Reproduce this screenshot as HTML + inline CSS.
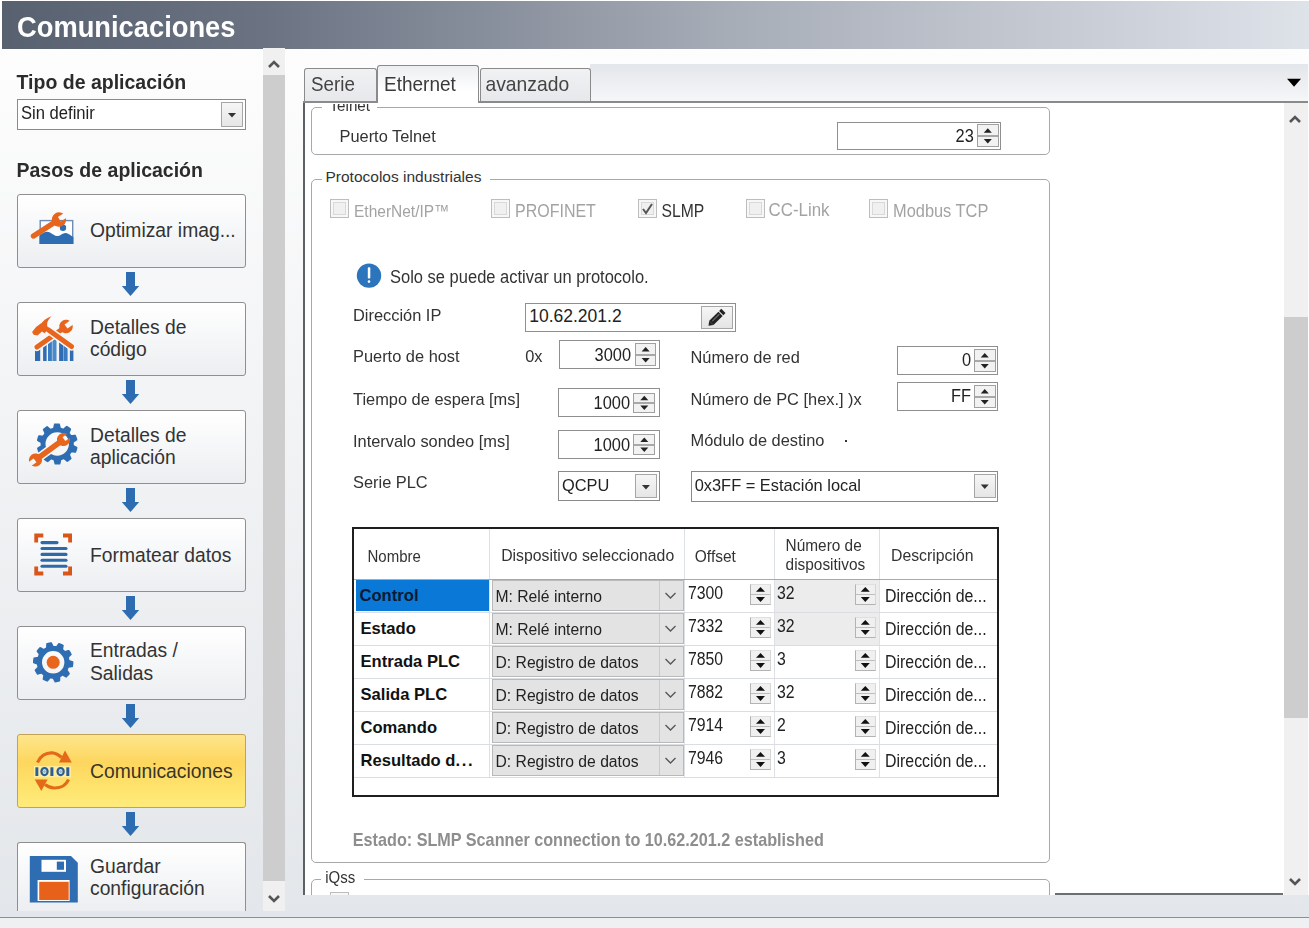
<!DOCTYPE html><html><head><meta charset="utf-8"><style>
html,body{margin:0;padding:0;}
body{width:1309px;height:928px;overflow:hidden;position:relative;background:#fff;font-family:"Liberation Sans", sans-serif;}
.a{position:absolute;box-sizing:border-box;}
.t{position:absolute;white-space:nowrap;}
svg.a{overflow:visible;}
</style></head><body>
<div class="a" style="left:0.0px;top:48.0px;width:1309.0px;height:869.0px;background:linear-gradient(#fdfdfd,#e3e6ea);"></div>
<div class="a" style="left:1.6px;top:1.0px;width:1307.4px;height:47.7px;background:linear-gradient(90deg,#586170 0%,#6b7383 20%,#a6acb6 55%,#dee2e9 100%);"></div>
<div class="t" style="left:17.0px;top:14.1px;font-size:27.3px;line-height:27.3px;font-weight:bold;color:#fff;transform:scaleY(1.08);transform-origin:0 23.11px;">Comunicaciones</div>
<div class="a" style="left:0.0px;top:916.5px;width:1309.0px;height:1.5px;background:#8c9095;"></div>
<div class="a" style="left:0.0px;top:918.0px;width:1309.0px;height:10.0px;background:#eff0f2;"></div>
<div class="t" style="left:16.5px;top:73.0px;font-size:19.5px;line-height:19.5px;font-weight:bold;color:#2b2b2b;transform:scaleY(1.06);transform-origin:0 16.51px;">Tipo de aplicación</div>
<div class="a" style="left:17.0px;top:99.0px;width:229.0px;height:31.0px;border:1px solid #8a8a8a;background:#fff;"></div>
<div class="a" style="left:221.0px;top:102.0px;width:22.0px;height:24.5px;border:1px solid #a6a6a6;background:linear-gradient(#f6f6f6,#e6e6e6);"></div>
<svg class="a" style="left:221px;top:102px;" width="23" height="25" viewBox="221 102 23 25"><polygon points="228.0,113.0 236.0,113.0 232.0,117.5" fill="#333"/></svg>
<div class="t" style="left:21.0px;top:105.8px;font-size:16.6px;line-height:16.6px;font-weight:normal;color:#222;transform:scaleY(1.05);transform-origin:0 14.05px;">Sin definir</div>
<div class="t" style="left:16.5px;top:160.7px;font-size:19.5px;line-height:19.5px;font-weight:bold;color:#2b2b2b;transform:scaleY(1.04);transform-origin:0 16.51px;">Pasos de aplicación</div>
<div class="a" style="left:17.0px;top:194.0px;width:229.0px;height:74.0px;border:1px solid #8f8f8f;border-radius:3px;background:linear-gradient(#ffffff,#eceef1);"></div>
<div class="a" style="left:17.0px;top:302.0px;width:229.0px;height:74.0px;border:1px solid #8f8f8f;border-radius:3px;background:linear-gradient(#ffffff,#eceef1);"></div>
<div class="a" style="left:17.0px;top:410.0px;width:229.0px;height:74.0px;border:1px solid #8f8f8f;border-radius:3px;background:linear-gradient(#ffffff,#eceef1);"></div>
<div class="a" style="left:17.0px;top:518.0px;width:229.0px;height:74.0px;border:1px solid #8f8f8f;border-radius:3px;background:linear-gradient(#ffffff,#eceef1);"></div>
<div class="a" style="left:17.0px;top:626.0px;width:229.0px;height:74.0px;border:1px solid #8f8f8f;border-radius:3px;background:linear-gradient(#ffffff,#eceef1);"></div>
<div class="a" style="left:17.0px;top:734.0px;width:229.0px;height:74.0px;border:1px solid #c2a257;border-radius:3px;background:linear-gradient(#fee58c 0%,#fdd65e 38%,#fee46e 75%,#ffeb7c 100%);"></div>
<div class="a" style="left:17.0px;top:842.0px;width:229.0px;height:69.0px;border:1px solid #8f8f8f;border-radius:3px;background:linear-gradient(#ffffff,#eceef1);border-bottom:none;border-bottom-left-radius:0;border-bottom-right-radius:0;"></div>
<svg class="a" style="left:120px;top:272px;" width="21" height="25" viewBox="120 272 21 25"><rect x="126" y="272" width="9" height="14.3" fill="#2d6cb0"/><polygon points="121.8,286 139.2,286 130.5,296" fill="#2d6cb0"/></svg>
<svg class="a" style="left:120px;top:380px;" width="21" height="25" viewBox="120 380 21 25"><rect x="126" y="380" width="9" height="14.3" fill="#2d6cb0"/><polygon points="121.8,394 139.2,394 130.5,404" fill="#2d6cb0"/></svg>
<svg class="a" style="left:120px;top:488px;" width="21" height="25" viewBox="120 488 21 25"><rect x="126" y="488" width="9" height="14.3" fill="#2d6cb0"/><polygon points="121.8,502 139.2,502 130.5,512" fill="#2d6cb0"/></svg>
<svg class="a" style="left:120px;top:596px;" width="21" height="25" viewBox="120 596 21 25"><rect x="126" y="596" width="9" height="14.3" fill="#2d6cb0"/><polygon points="121.8,610 139.2,610 130.5,620" fill="#2d6cb0"/></svg>
<svg class="a" style="left:120px;top:704px;" width="21" height="25" viewBox="120 704 21 25"><rect x="126" y="704" width="9" height="14.3" fill="#2d6cb0"/><polygon points="121.8,718 139.2,718 130.5,728" fill="#2d6cb0"/></svg>
<svg class="a" style="left:120px;top:812px;" width="21" height="25" viewBox="120 812 21 25"><rect x="126" y="812" width="9" height="14.3" fill="#2d6cb0"/><polygon points="121.8,826 139.2,826 130.5,836" fill="#2d6cb0"/></svg>
<div class="t" style="left:90.0px;top:221.1px;font-size:19.3px;line-height:19.3px;font-weight:normal;color:#333;">Optimizar imag...</div>
<div class="t" style="left:90.0px;top:318.1px;font-size:19.3px;line-height:19.3px;font-weight:normal;color:#333;">Detalles de</div>
<div class="t" style="left:90.0px;top:340.0px;font-size:19.3px;line-height:19.3px;font-weight:normal;color:#333;">código</div>
<div class="t" style="left:90.0px;top:426.4px;font-size:19.3px;line-height:19.3px;font-weight:normal;color:#333;">Detalles de</div>
<div class="t" style="left:90.0px;top:448.0px;font-size:19.3px;line-height:19.3px;font-weight:normal;color:#333;">aplicación</div>
<div class="t" style="left:90.0px;top:546.4px;font-size:19.3px;line-height:19.3px;font-weight:normal;color:#333;">Formatear datos</div>
<div class="t" style="left:90.0px;top:641.4px;font-size:19.3px;line-height:19.3px;font-weight:normal;color:#333;">Entradas /</div>
<div class="t" style="left:90.0px;top:664.3px;font-size:19.3px;line-height:19.3px;font-weight:normal;color:#333;">Salidas</div>
<div class="t" style="left:90.0px;top:761.9px;font-size:19.3px;line-height:19.3px;font-weight:normal;color:#3a3425;">Comunicaciones</div>
<div class="t" style="left:90.0px;top:857.2px;font-size:19.3px;line-height:19.3px;font-weight:normal;color:#333;">Guardar</div>
<div class="t" style="left:90.0px;top:879.2px;font-size:19.3px;line-height:19.3px;font-weight:normal;color:#333;">configuración</div>
<div class="a" style="left:263.0px;top:48.0px;width:22.0px;height:863.0px;background:#f0f0f0;"></div>
<div class="a" style="left:263.0px;top:75.0px;width:22.0px;height:806.0px;background:#cdcdcd;"></div>
<svg class="a" style="left:263px;top:48px;" width="22" height="863" viewBox="263 48 22 863"><polyline points="269,67 274,62 279,67" fill="none" stroke="#555" stroke-width="2.6"/><polyline points="269,896 274,901 279,896" fill="none" stroke="#555" stroke-width="2.6"/></svg>
<svg class="a" style="left:28px;top:208px;" width="50" height="40" viewBox="28 208 50 40"><rect x="40.2" y="220.6" width="32.5" height="22.6" fill="#fff" stroke="#6d8cb3" stroke-width="1.4"/><path d="M39.5,236 C43,232 47,231 50,232.5 C53,234 55,236.5 58,236 C61,235.5 63,232.5 66,233 C69,233.5 71,236 73.4,237 L73.4,243.9 L39.5,243.9 Z" fill="#2f6db3"/><circle cx="63" cy="227.8" r="3.2" fill="#2f6db3"/><g transform="translate(33.5,236) rotate(-32.91)"><mask id="m1" maskUnits="userSpaceOnUse" x="-40" y="-40" width="110.37268509697488" height="80"><rect x="-40" y="-40" width="110.37268509697488" height="80" fill="#fff"/><rect x="30.77268509697488" y="-2.6" width="9.8" height="5.2" fill="#000"/></mask><g mask="url(#m1)"><line x1="0" y1="0" x2="30.37268509697488" y2="0" stroke="#e8651d" stroke-width="5.4" stroke-linecap="round"/><circle cx="30.37268509697488" cy="0" r="7.2" fill="#e8651d"/></g></g></svg>
<svg class="a" style="left:28px;top:312px;" width="54" height="54" viewBox="28 312 54 54"><clipPath id="c2"><polygon points="34,351 54.2,338.5 74.5,351 74.5,362 34,362"/></clipPath><g clip-path="url(#c2)"><rect x="35" y="336" width="5.200000000000003" height="25" fill="#2f6cb2"/><rect x="43.1" y="336" width="3.5" height="25" fill="#2f6cb2"/><rect x="48" y="336" width="3.8999999999999986" height="25" fill="#3a7cc2"/><rect x="52.4" y="336" width="4.100000000000001" height="25" fill="#4a8acb"/><rect x="59.1" y="336" width="4.399999999999999" height="25" fill="#2f6cb2"/><rect x="63.8" y="336" width="3.799999999999997" height="25" fill="#3a7cc2"/><rect x="69.9" y="336" width="3.5" height="25" fill="#2f6cb2"/></g><g transform="translate(37,347) rotate(-35.26)"><mask id="m3" maskUnits="userSpaceOnUse" x="-40" y="-40" width="115.51408171415952" height="80"><rect x="-40" y="-40" width="115.51408171415952" height="80" fill="#fff"/><rect x="35.51408171415952" y="-2.5" width="9.8" height="5" fill="#000"/></mask><line x1="0" y1="0" x2="35.51408171415952" y2="0" stroke="#f7f8f9" stroke-width="8" stroke-linecap="round"/><g mask="url(#m3)"><line x1="0" y1="0" x2="35.51408171415952" y2="0" stroke="#e8651d" stroke-width="5" stroke-linecap="round"/><circle cx="35.51408171415952" cy="0" r="6.8" fill="#e8651d"/></g></g><line x1="48.5" y1="330" x2="71.5" y2="346.5" stroke="#f7f8f9" stroke-width="8" stroke-linecap="round"/><line x1="48.5" y1="330" x2="71.5" y2="346.5" stroke="#e8651d" stroke-width="5" stroke-linecap="round"/><path d="M32.1,332.1 L36.1,327.1 C38.5,324.8 40,324 41.4,323.2 C43,321.5 44,320.3 45.5,319.2 C47.5,317.8 49.5,316.8 51.5,316.2 C49.5,318.2 48.2,320 47.6,321.8 C47.1,323.2 46.9,324.6 47.2,325.9 L48.8,328.6 L44.5,333.2 L42,331.5 L37.5,335.6 L33.6,334.8 Z" fill="#e8651d"/></svg>
<svg class="a" style="left:28px;top:418px;" width="54" height="54" viewBox="28 418 54 54"><path d="M73.80,444.00 L73.80,444.26 L73.79,444.52 L73.78,444.78 L73.77,445.04 L74.21,445.34 L74.76,445.66 L75.37,446.01 L76.00,446.37 L76.64,446.77 L77.27,447.18 L77.49,447.54 L77.44,447.86 L77.37,448.18 L77.30,448.49 L77.23,448.81 L77.15,449.12 L77.07,449.44 L76.98,449.75 L76.89,450.06 L76.79,450.37 L76.69,450.67 L76.58,450.98 L76.47,451.28 L76.35,451.58 L76.23,451.88 L76.11,452.18 L75.97,452.48 L75.71,452.71 L74.95,452.70 L74.20,452.66 L73.47,452.61 L72.77,452.56 L72.11,452.51 L71.52,452.47 L71.35,452.67 L71.22,452.89 L71.07,453.11 L70.93,453.33 L70.78,453.55 L70.63,453.76 L70.47,453.97 L70.32,454.17 L70.16,454.38 L69.99,454.58 L70.17,455.08 L70.43,455.67 L70.72,456.30 L71.01,456.97 L71.30,457.66 L71.57,458.37 L71.54,458.79 L71.30,459.02 L71.06,459.24 L70.82,459.45 L70.58,459.66 L70.33,459.87 L70.08,460.08 L69.83,460.28 L69.57,460.47 L69.31,460.67 L69.05,460.85 L68.78,461.04 L68.51,461.22 L68.24,461.39 L67.96,461.56 L67.69,461.73 L67.41,461.89 L67.05,461.93 L66.45,461.47 L65.86,461.00 L65.30,460.53 L64.76,460.07 L64.27,459.65 L63.81,459.27 L63.55,459.34 L63.31,459.43 L63.07,459.53 L62.82,459.62 L62.58,459.71 L62.33,459.79 L62.08,459.87 L61.83,459.94 L61.58,460.01 L61.33,460.08 L61.18,460.59 L61.05,461.22 L60.91,461.90 L60.75,462.61 L60.58,463.34 L60.38,464.07 L60.10,464.39 L59.78,464.44 L59.46,464.48 L59.14,464.51 L58.82,464.54 L58.49,464.56 L58.17,464.58 L57.85,464.59 L57.52,464.60 L57.20,464.60 L56.88,464.60 L56.55,464.59 L56.23,464.58 L55.91,464.56 L55.58,464.54 L55.26,464.51 L54.94,464.48 L54.64,464.29 L54.41,463.57 L54.22,462.84 L54.04,462.13 L53.87,461.45 L53.72,460.81 L53.57,460.24 L53.32,460.14 L53.07,460.08 L52.82,460.01 L52.57,459.94 L52.32,459.87 L52.07,459.79 L51.82,459.71 L51.58,459.62 L51.33,459.53 L51.09,459.43 L50.67,459.76 L50.19,460.19 L49.68,460.66 L49.13,461.14 L48.56,461.63 L47.97,462.11 L47.56,462.21 L47.28,462.05 L46.99,461.89 L46.71,461.73 L46.44,461.56 L46.16,461.39 L45.89,461.22 L45.62,461.04 L45.35,460.85 L45.09,460.67 L44.83,460.47 L44.57,460.28 L44.32,460.08 L44.07,459.87 L43.82,459.66 L43.58,459.45 L43.34,459.24 L43.20,458.91 L43.44,458.20 L43.71,457.49 L43.98,456.81 L44.25,456.16 L44.50,455.56 L44.72,455.00 L44.58,454.78 L44.41,454.58 L44.24,454.38 L44.08,454.17 L43.93,453.97 L43.77,453.76 L43.62,453.55 L43.47,453.33 L43.33,453.11 L43.18,452.89 L42.65,452.91 L42.01,452.98 L41.33,453.05 L40.60,453.13 L39.85,453.19 L39.09,453.23 L38.70,453.06 L38.56,452.77 L38.43,452.48 L38.29,452.18 L38.17,451.88 L38.05,451.58 L37.93,451.28 L37.82,450.98 L37.71,450.67 L37.61,450.37 L37.51,450.06 L37.42,449.75 L37.33,449.44 L37.25,449.12 L37.17,448.81 L37.10,448.49 L37.03,448.18 L37.11,447.83 L37.73,447.40 L38.36,446.98 L38.98,446.59 L39.58,446.23 L40.13,445.88 L40.64,445.57 L40.65,445.30 L40.63,445.04 L40.62,444.78 L40.61,444.52 L40.60,444.26 L40.60,444.00 L40.60,443.74 L40.61,443.48 L40.62,443.22 L40.63,442.96 L40.19,442.66 L39.64,442.34 L39.03,441.99 L38.40,441.63 L37.76,441.23 L37.13,440.82 L36.91,440.46 L36.96,440.14 L37.03,439.82 L37.10,439.51 L37.17,439.19 L37.25,438.88 L37.33,438.56 L37.42,438.25 L37.51,437.94 L37.61,437.63 L37.71,437.33 L37.82,437.02 L37.93,436.72 L38.05,436.42 L38.17,436.12 L38.29,435.82 L38.43,435.52 L38.69,435.29 L39.45,435.30 L40.20,435.34 L40.93,435.39 L41.63,435.44 L42.29,435.49 L42.88,435.53 L43.05,435.33 L43.18,435.11 L43.33,434.89 L43.47,434.67 L43.62,434.45 L43.77,434.24 L43.93,434.03 L44.08,433.83 L44.24,433.62 L44.41,433.42 L44.23,432.92 L43.97,432.33 L43.68,431.70 L43.39,431.03 L43.10,430.34 L42.83,429.63 L42.86,429.21 L43.10,428.98 L43.34,428.76 L43.58,428.55 L43.82,428.34 L44.07,428.13 L44.32,427.92 L44.57,427.72 L44.83,427.53 L45.09,427.33 L45.35,427.15 L45.62,426.96 L45.89,426.78 L46.16,426.61 L46.44,426.44 L46.71,426.27 L46.99,426.11 L47.35,426.07 L47.95,426.53 L48.54,427.00 L49.10,427.47 L49.64,427.93 L50.13,428.35 L50.59,428.73 L50.85,428.66 L51.09,428.57 L51.33,428.47 L51.58,428.38 L51.82,428.29 L52.07,428.21 L52.32,428.13 L52.57,428.06 L52.82,427.99 L53.07,427.92 L53.22,427.41 L53.35,426.78 L53.49,426.10 L53.65,425.39 L53.82,424.66 L54.02,423.93 L54.30,423.61 L54.62,423.56 L54.94,423.52 L55.26,423.49 L55.58,423.46 L55.91,423.44 L56.23,423.42 L56.55,423.41 L56.88,423.40 L57.20,423.40 L57.52,423.40 L57.85,423.41 L58.17,423.42 L58.49,423.44 L58.82,423.46 L59.14,423.49 L59.46,423.52 L59.76,423.71 L59.99,424.43 L60.18,425.16 L60.36,425.87 L60.53,426.55 L60.68,427.19 L60.83,427.76 L61.08,427.86 L61.33,427.92 L61.58,427.99 L61.83,428.06 L62.08,428.13 L62.33,428.21 L62.58,428.29 L62.82,428.38 L63.07,428.47 L63.31,428.57 L63.73,428.24 L64.21,427.81 L64.72,427.34 L65.27,426.86 L65.84,426.37 L66.43,425.89 L66.84,425.79 L67.12,425.95 L67.41,426.11 L67.69,426.27 L67.96,426.44 L68.24,426.61 L68.51,426.78 L68.78,426.96 L69.05,427.15 L69.31,427.33 L69.57,427.53 L69.83,427.72 L70.08,427.92 L70.33,428.13 L70.58,428.34 L70.82,428.55 L71.06,428.76 L71.20,429.09 L70.96,429.80 L70.69,430.51 L70.42,431.19 L70.15,431.84 L69.90,432.44 L69.68,433.00 L69.82,433.22 L69.99,433.42 L70.16,433.62 L70.32,433.83 L70.47,434.03 L70.63,434.24 L70.78,434.45 L70.93,434.67 L71.07,434.89 L71.22,435.11 L71.75,435.09 L72.39,435.02 L73.07,434.95 L73.80,434.87 L74.55,434.81 L75.31,434.77 L75.70,434.94 L75.84,435.23 L75.97,435.52 L76.11,435.82 L76.23,436.12 L76.35,436.42 L76.47,436.72 L76.58,437.02 L76.69,437.33 L76.79,437.63 L76.89,437.94 L76.98,438.25 L77.07,438.56 L77.15,438.88 L77.23,439.19 L77.30,439.51 L77.37,439.82 L77.29,440.17 L76.67,440.60 L76.04,441.02 L75.42,441.41 L74.82,441.77 L74.27,442.12 L73.76,442.43 L73.75,442.70 L73.77,442.96 L73.78,443.22 L73.79,443.48 L73.80,443.74 Z M57.2,432.3 A11.7,11.7 0 1 0 57.2,455.7 A11.7,11.7 0 1 0 57.2,432.3 Z" fill="#2f6db3" fill-rule="evenodd"/><g transform="translate(35.5,460) rotate(-36.21)"><mask id="m4" maskUnits="userSpaceOnUse" x="-40" y="-40" width="114.70230539892127" height="80"><rect x="-40" y="-40" width="114.70230539892127" height="80" fill="#fff"/><rect x="35.30230539892127" y="-2.4" width="9" height="4.8" fill="#000"/><rect x="-9.6" y="-2.4" width="9" height="4.8" fill="#000"/></mask><line x1="0" y1="0" x2="34.70230539892127" y2="0" stroke="#f7f8f9" stroke-width="8.6" stroke-linecap="round"/><g mask="url(#m4)"><line x1="0" y1="0" x2="34.70230539892127" y2="0" stroke="#e8651d" stroke-width="5.6" stroke-linecap="round"/><circle cx="34.70230539892127" cy="0" r="6.6" fill="#e8651d"/><circle cx="0" cy="0" r="6.6" fill="#e8651d"/></g></g></svg>
<svg class="a" style="left:30px;top:530px;" width="46" height="49" viewBox="30 530 46 49"><polyline points="43.3,535.5 36.199999999999996,535.5 36.199999999999996,542.6" fill="none" stroke="#d9561a" stroke-width="3.8"/><polyline points="63,535.5 70.1,535.5 70.1,542.6" fill="none" stroke="#d9561a" stroke-width="3.8"/><polyline points="43.3,573.5 36.199999999999996,573.5 36.199999999999996,566.4" fill="none" stroke="#d9561a" stroke-width="3.8"/><polyline points="63,573.5 70.1,573.5 70.1,566.4" fill="none" stroke="#d9561a" stroke-width="3.8"/><line x1="42" y1="542.6" x2="57" y2="542.6" stroke="#2f6aa8" stroke-width="3.1" stroke-linecap="round"/><line x1="42" y1="548.5" x2="66" y2="548.5" stroke="#2f6aa8" stroke-width="3.1" stroke-linecap="round"/><line x1="42" y1="554.4" x2="66" y2="554.4" stroke="#2f6aa8" stroke-width="3.1" stroke-linecap="round"/><line x1="42" y1="560.3" x2="66" y2="560.3" stroke="#2f6aa8" stroke-width="3.1" stroke-linecap="round"/><line x1="42" y1="566.3" x2="66" y2="566.3" stroke="#2f6aa8" stroke-width="3.1" stroke-linecap="round"/></svg>
<svg class="a" style="left:30px;top:640px;" width="46" height="45" viewBox="30 640 46 45"><path d="M73.40,662.30 L73.40,662.62 L73.39,662.93 L73.38,663.25 L73.36,663.57 L73.34,663.88 L73.31,664.20 L73.28,664.52 L73.24,664.83 L73.20,665.15 L73.15,665.46 L73.10,665.77 L73.04,666.09 L72.98,666.40 L72.91,666.71 L72.84,667.02 L72.17,667.17 L71.46,667.29 L70.76,667.40 L70.08,667.49 L69.45,667.58 L68.87,667.67 L68.63,667.86 L68.54,668.10 L68.45,668.34 L68.35,668.58 L68.25,668.81 L68.15,669.05 L68.04,669.28 L67.93,669.52 L67.81,669.75 L67.69,669.97 L67.83,670.34 L68.17,670.84 L68.54,671.37 L68.94,671.94 L69.33,672.54 L69.72,673.15 L69.91,673.65 L69.73,673.92 L69.54,674.17 L69.35,674.43 L69.16,674.68 L68.96,674.93 L68.76,675.18 L68.56,675.42 L68.35,675.66 L68.14,675.89 L67.93,676.13 L67.71,676.36 L67.48,676.58 L67.26,676.81 L67.03,677.03 L66.79,677.24 L66.56,677.45 L66.32,677.66 L65.68,677.39 L65.04,677.07 L64.41,676.75 L63.81,676.43 L63.24,676.12 L62.72,675.85 L62.42,675.86 L62.20,676.01 L61.99,676.15 L61.77,676.28 L61.55,676.42 L61.33,676.55 L61.10,676.67 L60.87,676.79 L60.65,676.91 L60.42,677.03 L60.31,677.41 L60.29,678.01 L60.28,678.66 L60.26,679.35 L60.23,680.06 L60.18,680.78 L60.04,681.31 L59.74,681.41 L59.44,681.51 L59.14,681.61 L58.84,681.70 L58.53,681.78 L58.22,681.87 L57.92,681.94 L57.61,682.01 L57.30,682.08 L56.99,682.14 L56.67,682.20 L56.36,682.25 L56.05,682.30 L55.73,682.34 L55.42,682.38 L55.10,682.41 L54.78,682.44 L54.43,681.85 L54.09,681.21 L53.77,680.57 L53.48,679.96 L53.20,679.39 L52.94,678.86 L52.68,678.69 L52.43,678.68 L52.17,678.67 L51.91,678.65 L51.66,678.63 L51.40,678.60 L51.14,678.57 L50.89,678.54 L50.63,678.50 L50.38,678.46 L50.07,678.70 L49.70,679.18 L49.31,679.70 L48.89,680.24 L48.45,680.80 L47.99,681.36 L47.56,681.70 L47.26,681.61 L46.96,681.51 L46.66,681.41 L46.36,681.31 L46.06,681.20 L45.76,681.08 L45.47,680.96 L45.18,680.84 L44.89,680.71 L44.60,680.58 L44.31,680.44 L44.03,680.30 L43.75,680.15 L43.47,680.00 L43.19,679.85 L42.92,679.69 L42.65,679.52 L42.71,678.84 L42.81,678.12 L42.92,677.42 L43.04,676.75 L43.16,676.12 L43.25,675.55 L43.15,675.26 L42.95,675.10 L42.75,674.94 L42.55,674.77 L42.35,674.60 L42.16,674.43 L41.97,674.26 L41.79,674.08 L41.60,673.90 L41.42,673.71 L41.03,673.73 L40.45,673.90 L39.83,674.09 L39.17,674.29 L38.48,674.48 L37.78,674.66 L37.24,674.68 L37.05,674.43 L36.86,674.17 L36.67,673.92 L36.49,673.65 L36.32,673.39 L36.14,673.12 L35.98,672.85 L35.81,672.58 L35.65,672.31 L35.50,672.03 L35.35,671.75 L35.20,671.47 L35.06,671.19 L34.92,670.90 L34.79,670.61 L34.66,670.32 L34.54,670.03 L34.99,669.51 L35.49,668.99 L36.00,668.49 L36.49,668.02 L36.95,667.58 L37.37,667.17 L37.45,666.88 L37.38,666.63 L37.32,666.38 L37.25,666.13 L37.19,665.88 L37.14,665.63 L37.09,665.37 L37.04,665.12 L37.00,664.87 L36.96,664.61 L36.63,664.39 L36.07,664.19 L35.45,663.98 L34.80,663.75 L34.13,663.50 L33.46,663.23 L33.01,662.93 L33.00,662.62 L33.00,662.30 L33.00,661.98 L33.01,661.67 L33.02,661.35 L33.04,661.03 L33.06,660.72 L33.09,660.40 L33.12,660.08 L33.16,659.77 L33.20,659.45 L33.25,659.14 L33.30,658.83 L33.36,658.51 L33.42,658.20 L33.49,657.89 L33.56,657.58 L34.23,657.43 L34.94,657.31 L35.64,657.20 L36.32,657.11 L36.95,657.02 L37.53,656.93 L37.77,656.74 L37.86,656.50 L37.95,656.26 L38.05,656.02 L38.15,655.79 L38.25,655.55 L38.36,655.32 L38.47,655.08 L38.59,654.85 L38.71,654.63 L38.57,654.26 L38.23,653.76 L37.86,653.23 L37.46,652.66 L37.07,652.06 L36.68,651.45 L36.49,650.95 L36.67,650.68 L36.86,650.43 L37.05,650.17 L37.24,649.92 L37.44,649.67 L37.64,649.42 L37.84,649.18 L38.05,648.94 L38.26,648.71 L38.47,648.47 L38.69,648.24 L38.92,648.02 L39.14,647.79 L39.37,647.57 L39.61,647.36 L39.84,647.15 L40.08,646.94 L40.72,647.21 L41.36,647.53 L41.99,647.85 L42.59,648.17 L43.16,648.48 L43.68,648.75 L43.98,648.74 L44.20,648.59 L44.41,648.45 L44.63,648.32 L44.85,648.18 L45.07,648.05 L45.30,647.93 L45.53,647.81 L45.75,647.69 L45.98,647.57 L46.09,647.19 L46.11,646.59 L46.12,645.94 L46.14,645.25 L46.17,644.54 L46.22,643.82 L46.36,643.29 L46.66,643.19 L46.96,643.09 L47.26,642.99 L47.56,642.90 L47.87,642.82 L48.18,642.73 L48.48,642.66 L48.79,642.59 L49.10,642.52 L49.41,642.46 L49.73,642.40 L50.04,642.35 L50.35,642.30 L50.67,642.26 L50.98,642.22 L51.30,642.19 L51.62,642.16 L51.97,642.75 L52.31,643.39 L52.63,644.03 L52.92,644.64 L53.20,645.21 L53.46,645.74 L53.72,645.91 L53.97,645.92 L54.23,645.93 L54.49,645.95 L54.74,645.97 L55.00,646.00 L55.26,646.03 L55.51,646.06 L55.77,646.10 L56.02,646.14 L56.33,645.90 L56.70,645.42 L57.09,644.90 L57.51,644.36 L57.95,643.80 L58.41,643.24 L58.84,642.90 L59.14,642.99 L59.44,643.09 L59.74,643.19 L60.04,643.29 L60.34,643.40 L60.64,643.52 L60.93,643.64 L61.22,643.76 L61.51,643.89 L61.80,644.02 L62.09,644.16 L62.37,644.30 L62.65,644.45 L62.93,644.60 L63.21,644.75 L63.48,644.91 L63.75,645.08 L63.69,645.76 L63.59,646.48 L63.48,647.18 L63.36,647.85 L63.24,648.48 L63.15,649.05 L63.25,649.34 L63.45,649.50 L63.65,649.66 L63.85,649.83 L64.05,650.00 L64.24,650.17 L64.43,650.34 L64.61,650.52 L64.80,650.70 L64.98,650.89 L65.37,650.87 L65.95,650.70 L66.57,650.51 L67.23,650.31 L67.92,650.12 L68.62,649.94 L69.16,649.92 L69.35,650.17 L69.54,650.43 L69.73,650.68 L69.91,650.95 L70.08,651.21 L70.26,651.48 L70.42,651.75 L70.59,652.02 L70.75,652.29 L70.90,652.57 L71.05,652.85 L71.20,653.13 L71.34,653.41 L71.48,653.70 L71.61,653.99 L71.74,654.28 L71.86,654.57 L71.41,655.09 L70.91,655.61 L70.40,656.11 L69.91,656.58 L69.45,657.02 L69.03,657.43 L68.95,657.72 L69.02,657.97 L69.08,658.22 L69.15,658.47 L69.21,658.72 L69.26,658.97 L69.31,659.23 L69.36,659.48 L69.40,659.73 L69.44,659.99 L69.77,660.21 L70.33,660.41 L70.95,660.62 L71.60,660.85 L72.27,661.10 L72.94,661.37 L73.39,661.67 L73.40,661.98 Z M53.2,651.1 A11.2,11.2 0 1 0 53.2,673.5 A11.2,11.2 0 1 0 53.2,651.1 Z" fill="#2f6db3" fill-rule="evenodd"/><circle cx="53.2" cy="662.3" r="6.5" fill="#e8651d"/></svg>
<svg class="a" style="left:30px;top:745px;" width="46" height="50" viewBox="30 745 46 50"><path d="M37.5,762.5 C40,756 46,752.5 52,752.8 C55.5,753 58.5,754.5 61.5,757.5" fill="none" stroke="#e26a18" stroke-width="3.2"/><polygon points="59,762.4 71.8,762.4 65,750.6" fill="#e26a18"/><path d="M68.5,779.5 C66,785.5 60,788.2 54,788 C50.5,787.8 47.5,786.5 45,784.5" fill="none" stroke="#e26a18" stroke-width="3.2"/><polygon points="34.8,779.4 47.6,779.4 41.3,791" fill="#e26a18"/><rect x="34" y="766" width="37" height="11.3" fill="#fff3b8" opacity="0.7"/><rect x="35.4" y="767.3" width="2.9" height="8.7" fill="#2b5e96"/><ellipse cx="44.5" cy="771.6" rx="3.1" ry="3.6" fill="none" stroke="#2b5e96" stroke-width="2.2"/><circle cx="44.5" cy="771.6" r="1.3" fill="#7fb6e0"/><rect x="50.4" y="767.3" width="3" height="8.7" fill="#2b5e96"/><ellipse cx="60.6" cy="771.6" rx="3.1" ry="3.6" fill="none" stroke="#2b5e96" stroke-width="2.2"/><circle cx="60.6" cy="771.6" r="1.3" fill="#7fb6e0"/><rect x="66.3" y="767.3" width="3" height="8.7" fill="#2b5e96"/></svg>
<svg class="a" style="left:26px;top:852px;" width="56" height="54" viewBox="26 852 56 54"><path d="M29.8,856 L71,856 L77.8,862.8 L77.8,902.5 L29.8,902.5 Z" fill="#2f6db3"/><rect x="41.5" y="859.8" width="24.5" height="12" fill="#fff"/><rect x="56.8" y="861.6" width="7.2" height="8.2" fill="#2f6db3"/><rect x="37.6" y="880" width="32" height="21" fill="#fff"/><rect x="39.2" y="881.8" width="29.5" height="18.2" fill="#e8611a"/></svg>
<div class="a" style="left:590.0px;top:64.0px;width:718.0px;height:38.0px;background:linear-gradient(#e3e6ea,#f6f7f9);"></div>
<div class="a" style="left:303.5px;top:67.5px;width:73.0px;height:34.0px;border:1px solid #8a8a8a;border-bottom:none;border-radius:3px 3px 0 0;background:linear-gradient(#f0f1f3,#e6e8eb);"></div>
<div class="a" style="left:479.5px;top:67.5px;width:111.5px;height:34.0px;border:1px solid #8a8a8a;border-bottom:none;border-radius:3px 3px 0 0;background:linear-gradient(#f0f1f3,#e6e8eb);"></div>
<div class="a" style="left:303.0px;top:101.0px;width:1005.0px;height:1.5px;background:#8a8a8a;"></div>
<div class="t" style="left:311.0px;top:76.2px;font-size:18.8px;line-height:18.8px;font-weight:normal;color:#444;transform:scaleY(1.06);transform-origin:0 15.91px;">Serie</div>
<div class="t" style="left:485.5px;top:75.4px;font-size:19.3px;line-height:19.3px;font-weight:normal;color:#444;transform:scaleY(1.04);transform-origin:0 16.34px;">avanzado</div>
<svg class="a" style="left:1284px;top:76px;" width="20" height="14" viewBox="1284 76 20 14"><polygon points="1287.0,78.7 1301.0,78.7 1294,86.7" fill="#000"/></svg>
<div class="a" style="left:303.0px;top:102.5px;width:1006.0px;height:792.5px;background:#fff;"></div>
<div class="a" style="left:303.0px;top:102.5px;width:2.0px;height:792.5px;background:#5d6166;"></div>
<div class="a" style="left:1054.5px;top:893.0px;width:228.5px;height:2.0px;background:#6b6f74;"></div>
<div class="a" style="left:1284.0px;top:102.5px;width:23.5px;height:792.5px;background:#f0f0f0;"></div>
<div class="a" style="left:1284.0px;top:317.0px;width:23.5px;height:401.0px;background:#cdcdcd;"></div>
<svg class="a" style="left:1284px;top:102px;" width="24" height="793" viewBox="1284 102 24 793"><polyline points="1290,122 1295,117 1300,122" fill="none" stroke="#555" stroke-width="2.6"/><polyline points="1290,879 1295,884 1300,879" fill="none" stroke="#555" stroke-width="2.6"/></svg>
<div class="a" style="left:376.5px;top:64.5px;width:102.0px;height:38.0px;border:1px solid #8a8a8a;border-bottom:none;border-radius:3px 3px 0 0;background:linear-gradient(#eceef1,#ffffff 70%);"></div>
<div class="a" style="left:377.5px;top:100.0px;width:100.0px;height:4.0px;background:#fff;"></div>
<div class="t" style="left:384.0px;top:74.5px;font-size:19.0px;line-height:19.0px;font-weight:normal;color:#3a3a3a;transform:scaleY(1.04);transform-origin:0 16.08px;">Ethernet</div>
<div class="a" style="left:305px;top:103.8px;width:979px;height:791.2px;overflow:hidden;">
<div class="a" style="left:-305px;top:-103.8px;width:1309px;height:928px;">
<div class="a" style="left:311.0px;top:106.5px;width:738.5px;height:48.0px;border:1px solid #a8a8a8;border-radius:5px;"></div>
<div class="a" style="left:322.0px;top:104.5px;width:54.5px;height:5.0px;background:#fff;"></div>
<div class="t" style="left:329.5px;top:97.7px;font-size:15.2px;line-height:15.2px;font-weight:normal;color:#333;transform:scaleY(1.1);transform-origin:0 12.87px;">Telnet</div>
<div class="t" style="left:339.5px;top:127.7px;font-size:16.4px;line-height:16.4px;font-weight:normal;color:#333;transform:scaleY(1.06);transform-origin:0 13.88px;">Puerto Telnet</div>
<div class="a" style="left:837.3px;top:121.6px;width:164.2px;height:28.5px;border:1px solid #8f8f8f;background:#fff;"></div>
<div class="a" style="left:976.8px;top:124.4px;width:22.0px;height:22.9px;border:1px solid #a0a0a0;background:#f2f2f2;"></div>
<div class="a" style="left:977.8px;top:134.9px;width:20.0px;height:2.0px;background:#a8a8a8;"></div>
<svg class="a" style="left:976px;top:124px;" width="23" height="24" viewBox="976 124 23 24"><polygon points="983.8,132.675 991.8,132.675 987.8,128.175" fill="#222"/><polygon points="983.8,139.025 991.8,139.025 987.8,143.525" fill="#222"/></svg>
<div class="t" style="right:335.2px;top:127.6px;font-size:16.4px;line-height:16.4px;font-weight:normal;color:#222;transform:scaleY(1.07);transform-origin:0 13.88px;">23</div>
<div class="a" style="left:311.0px;top:178.5px;width:738.5px;height:684.0px;border:1px solid #a8a8a8;border-radius:5px;"></div>
<div class="a" style="left:321.5px;top:176.5px;width:168.0px;height:5.0px;background:#fff;"></div>
<div class="t" style="left:325.5px;top:169.1px;font-size:15.5px;line-height:15.5px;font-weight:normal;color:#333;">Protocolos industriales</div>
<div class="a" style="left:330.0px;top:199.0px;width:19.0px;height:19.0px;border:1px solid #bdbdbd;background:#f7f7f7;"></div>
<div class="a" style="left:333.0px;top:202.0px;width:13.0px;height:13.0px;border:1px solid #d9d9d9;background:#f0f0f0;"></div>
<div class="t" style="left:354.0px;top:203.9px;font-size:15.5px;line-height:15.5px;font-weight:normal;color:#a3a3a3;transform:scaleY(1.12);transform-origin:0 13.12px;">EtherNet/IP™</div>
<div class="a" style="left:490.5px;top:199.0px;width:19.0px;height:19.0px;border:1px solid #bdbdbd;background:#f7f7f7;"></div>
<div class="a" style="left:493.5px;top:202.0px;width:13.0px;height:13.0px;border:1px solid #d9d9d9;background:#f0f0f0;"></div>
<div class="t" style="left:515.0px;top:203.5px;font-size:16.0px;line-height:16.0px;font-weight:normal;color:#a3a3a3;transform:scaleY(1.12);transform-origin:0 13.54px;">PROFINET</div>
<div class="a" style="left:638.0px;top:199.0px;width:19.0px;height:19.0px;border:1px solid #bdbdbd;background:#f7f7f7;"></div>
<div class="a" style="left:641.0px;top:202.0px;width:13.0px;height:13.0px;border:1px solid #d9d9d9;background:#f0f0f0;"></div>
<svg class="a" style="left:638px;top:199px;" width="20" height="20" viewBox="638 199 20 20"><polyline points="643,209 646,213 652,204" fill="none" stroke="#555" stroke-width="2"/></svg>
<div class="t" style="left:661.5px;top:203.7px;font-size:15.7px;line-height:15.7px;font-weight:normal;color:#333;transform:scaleY(1.12);transform-origin:0 13.29px;">SLMP</div>
<div class="a" style="left:746.0px;top:199.0px;width:19.0px;height:19.0px;border:1px solid #bdbdbd;background:#f7f7f7;"></div>
<div class="a" style="left:749.0px;top:202.0px;width:13.0px;height:13.0px;border:1px solid #d9d9d9;background:#f0f0f0;"></div>
<div class="t" style="left:768.5px;top:202.7px;font-size:16.9px;line-height:16.9px;font-weight:normal;color:#a3a3a3;transform:scaleY(1.06);transform-origin:0 14.31px;">CC-Link</div>
<div class="a" style="left:868.5px;top:199.0px;width:19.0px;height:19.0px;border:1px solid #bdbdbd;background:#f7f7f7;"></div>
<div class="a" style="left:871.5px;top:202.0px;width:13.0px;height:13.0px;border:1px solid #d9d9d9;background:#f0f0f0;"></div>
<div class="t" style="left:893.0px;top:203.1px;font-size:16.4px;line-height:16.4px;font-weight:normal;color:#a3a3a3;transform:scaleY(1.08);transform-origin:0 13.88px;">Modbus TCP</div>
<svg class="a" style="left:356px;top:263px;" width="26" height="26" viewBox="356 263 26 26"><circle cx="369" cy="275.6" r="12.2" fill="#2c74bc"/><rect x="367.8" y="267.3" width="2.5" height="11.2" rx="0.8" fill="#fff"/><circle cx="369" cy="281.6" r="1.3" fill="#fff"/></svg>
<div class="t" style="left:390.0px;top:268.7px;font-size:16.5px;line-height:16.5px;font-weight:normal;color:#333;transform:scaleY(1.06);transform-origin:0 13.97px;">Solo se puede activar un protocolo.</div>
<div class="t" style="left:353.0px;top:306.6px;font-size:16.4px;line-height:16.4px;font-weight:normal;color:#333;transform:scaleY(1.06);transform-origin:0 13.88px;">Dirección IP</div>
<div class="t" style="left:353.0px;top:348.3px;font-size:16.4px;line-height:16.4px;font-weight:normal;color:#333;transform:scaleY(1.06);transform-origin:0 13.88px;">Puerto de host</div>
<div class="t" style="left:525.2px;top:348.3px;font-size:16.4px;line-height:16.4px;font-weight:normal;color:#333;transform:scaleY(1.06);transform-origin:0 13.88px;">0x</div>
<div class="t" style="left:353.0px;top:390.5px;font-size:16.4px;line-height:16.4px;font-weight:normal;color:#333;transform:scaleY(1.06);transform-origin:0 13.88px;">Tiempo de espera [ms]</div>
<div class="t" style="left:353.0px;top:432.6px;font-size:16.4px;line-height:16.4px;font-weight:normal;color:#333;transform:scaleY(1.06);transform-origin:0 13.88px;">Intervalo sondeo [ms]</div>
<div class="t" style="left:353.0px;top:473.8px;font-size:16.4px;line-height:16.4px;font-weight:normal;color:#333;transform:scaleY(1.06);transform-origin:0 13.88px;">Serie PLC</div>
<div class="t" style="left:690.5px;top:348.5px;font-size:16.4px;line-height:16.4px;font-weight:normal;color:#333;transform:scaleY(1.06);transform-origin:0 13.88px;">Número de red</div>
<div class="t" style="left:690.5px;top:390.8px;font-size:16.4px;line-height:16.4px;font-weight:normal;color:#333;transform:scaleY(1.06);transform-origin:0 13.88px;">Número de PC [hex.] )x</div>
<div class="t" style="left:690.5px;top:432.1px;font-size:16.4px;line-height:16.4px;font-weight:normal;color:#333;transform:scaleY(1.06);transform-origin:0 13.88px;">Módulo de destino</div>
<div class="a" style="left:844.5px;top:440.0px;width:2.0px;height:2.0px;background:#334;"></div>
<div class="a" style="left:525.3px;top:302.9px;width:210.5px;height:29.0px;border:1px solid #8f8f8f;background:#fff;"></div>
<div class="a" style="left:701.0px;top:305.9px;width:32.0px;height:22.8px;border:1px solid #a6a6a6;background:linear-gradient(#f6f6f6,#e4e4e4);"></div>
<svg class="a" style="left:701px;top:305px;" width="32" height="24" viewBox="701 305 32 24"><g transform="translate(717,317.3) rotate(-45)"><rect x="-8" y="-3" width="13" height="6" fill="#222"/><rect x="6" y="-3" width="3" height="6" fill="#222"/><polygon points="-8,-3 -8,3 -12,0" fill="#222"/><rect x="-6" y="-1.2" width="10" height="1.2" fill="#fff" opacity="0.35"/></g></svg>
<div class="t" style="left:529.2px;top:308.2px;font-size:17.5px;line-height:17.5px;font-weight:normal;color:#222;">10.62.201.2</div>
<div class="a" style="left:558.7px;top:340.3px;width:101.0px;height:28.9px;border:1px solid #8f8f8f;background:#fff;"></div>
<div class="a" style="left:635.1px;top:343.3px;width:21.1px;height:22.9px;border:1px solid #a0a0a0;background:#f2f2f2;"></div>
<div class="a" style="left:636.1px;top:353.8px;width:19.1px;height:2.0px;background:#a8a8a8;"></div>
<svg class="a" style="left:635px;top:343px;" width="22" height="24" viewBox="635 343 22 24"><polygon points="641.6500000000001,351.575 649.6500000000001,351.575 645.6500000000001,347.075" fill="#222"/><polygon points="641.6500000000001,357.925 649.6500000000001,357.925 645.6500000000001,362.425" fill="#222"/></svg>
<div class="t" style="right:678.0px;top:346.5px;font-size:16.4px;line-height:16.4px;font-weight:normal;color:#222;transform:scaleY(1.07);transform-origin:0 13.88px;">3000</div>
<div class="a" style="left:558.4px;top:388.4px;width:101.5px;height:29.1px;border:1px solid #8f8f8f;background:#fff;"></div>
<div class="a" style="left:633.2px;top:392.6px;width:22.2px;height:20.7px;border:1px solid #a0a0a0;background:#f2f2f2;"></div>
<div class="a" style="left:634.2px;top:402.0px;width:20.2px;height:2.0px;background:#a8a8a8;"></div>
<svg class="a" style="left:633px;top:392px;" width="23" height="22" viewBox="633 392 23 22"><polygon points="640.3,400.32500000000005 648.3,400.32500000000005 644.3,395.82500000000005" fill="#222"/><polygon points="640.3,405.575 648.3,405.575 644.3,410.075" fill="#222"/></svg>
<div class="t" style="right:679.0px;top:394.6px;font-size:16.4px;line-height:16.4px;font-weight:normal;color:#222;transform:scaleY(1.07);transform-origin:0 13.88px;">1000</div>
<div class="a" style="left:558.4px;top:430.3px;width:101.5px;height:29.0px;border:1px solid #8f8f8f;background:#fff;"></div>
<div class="a" style="left:633.2px;top:434.3px;width:22.2px;height:21.0px;border:1px solid #a0a0a0;background:#f2f2f2;"></div>
<div class="a" style="left:634.2px;top:443.8px;width:20.2px;height:2.0px;background:#a8a8a8;"></div>
<svg class="a" style="left:633px;top:434px;" width="23" height="22" viewBox="633 434 23 22"><polygon points="640.3,442.1 648.3,442.1 644.3,437.6" fill="#222"/><polygon points="640.3,447.5 648.3,447.5 644.3,452.0" fill="#222"/></svg>
<div class="t" style="right:679.0px;top:436.8px;font-size:16.4px;line-height:16.4px;font-weight:normal;color:#222;transform:scaleY(1.07);transform-origin:0 13.88px;">1000</div>
<div class="a" style="left:897.4px;top:346.3px;width:101.1px;height:28.9px;border:1px solid #8f8f8f;background:#fff;"></div>
<div class="a" style="left:974.0px;top:349.3px;width:21.5px;height:23.0px;border:1px solid #a0a0a0;background:#f2f2f2;"></div>
<div class="a" style="left:975.0px;top:359.8px;width:19.5px;height:2.0px;background:#a8a8a8;"></div>
<svg class="a" style="left:974px;top:349px;" width="22" height="24" viewBox="974 349 22 24"><polygon points="980.75,357.6 988.75,357.6 984.75,353.1" fill="#222"/><polygon points="980.75,364.0 988.75,364.0 984.75,368.5" fill="#222"/></svg>
<div class="t" style="right:338.0px;top:352.2px;font-size:16.4px;line-height:16.4px;font-weight:normal;color:#222;transform:scaleY(1.07);transform-origin:0 13.88px;">0</div>
<div class="a" style="left:897.4px;top:382.2px;width:101.1px;height:29.2px;border:1px solid #8f8f8f;background:#fff;"></div>
<div class="a" style="left:974.0px;top:385.3px;width:21.5px;height:23.0px;border:1px solid #a0a0a0;background:#f2f2f2;"></div>
<div class="a" style="left:975.0px;top:395.8px;width:19.5px;height:2.0px;background:#a8a8a8;"></div>
<svg class="a" style="left:974px;top:385px;" width="22" height="24" viewBox="974 385 22 24"><polygon points="980.75,393.6 988.75,393.6 984.75,389.1" fill="#222"/><polygon points="980.75,400.0 988.75,400.0 984.75,404.5" fill="#222"/></svg>
<div class="t" style="right:338.0px;top:388.1px;font-size:16.4px;line-height:16.4px;font-weight:normal;color:#222;transform:scaleY(1.07);transform-origin:0 13.88px;">FF</div>
<div class="a" style="left:558.4px;top:471.0px;width:101.5px;height:30.2px;border:1px solid #8a8a8a;background:#fff;"></div>
<div class="a" style="left:635.0px;top:473.8px;width:21.9px;height:24.7px;border:1px solid #a6a6a6;background:linear-gradient(#f6f6f6,#e6e6e6);"></div>
<svg class="a" style="left:635px;top:473px;" width="22" height="26" viewBox="635 473 22 26"><polygon points="641.95,484.9 649.95,484.9 645.95,489.4" fill="#333"/></svg>
<div class="t" style="left:562.0px;top:477.2px;font-size:16.4px;line-height:16.4px;font-weight:normal;color:#222;transform:scaleY(1.05);transform-origin:0 13.88px;">QCPU</div>
<div class="a" style="left:690.8px;top:470.8px;width:307.7px;height:31.2px;border:1px solid #8a8a8a;background:#fff;"></div>
<div class="a" style="left:974.0px;top:473.7px;width:21.5px;height:23.9px;border:1px solid #a6a6a6;background:linear-gradient(#f6f6f6,#e6e6e6);"></div>
<svg class="a" style="left:974px;top:473px;" width="22" height="25" viewBox="974 473 22 25"><polygon points="980.75,484.4 988.75,484.4 984.75,488.9" fill="#333"/></svg>
<div class="t" style="left:694.7px;top:476.5px;font-size:16.4px;line-height:16.4px;font-weight:normal;color:#222;transform:scaleY(1.05);transform-origin:0 13.88px;">0x3FF = Estación local</div>
<div class="a" style="left:352.2px;top:527.4px;width:646.8px;height:269.8px;border:2px solid #1f1f1f;background:#fff;"></div>
<div class="a" style="left:489.1px;top:529.4px;width:1.0px;height:248.1px;background:#dde1e6;"></div>
<div class="a" style="left:683.5px;top:529.4px;width:1.0px;height:248.1px;background:#dde1e6;"></div>
<div class="a" style="left:773.9px;top:529.4px;width:1.0px;height:248.1px;background:#dde1e6;"></div>
<div class="a" style="left:879.1px;top:529.4px;width:1.0px;height:248.1px;background:#dde1e6;"></div>
<div class="a" style="left:354.0px;top:578.7px;width:643.0px;height:1.2px;background:#a9a9a9;"></div>
<div class="a" style="left:354.0px;top:611.6px;width:643.0px;height:1.2px;background:#dadde1;"></div>
<div class="a" style="left:354.0px;top:644.6px;width:643.0px;height:1.2px;background:#dadde1;"></div>
<div class="a" style="left:354.0px;top:677.6px;width:643.0px;height:1.2px;background:#dadde1;"></div>
<div class="a" style="left:354.0px;top:710.6px;width:643.0px;height:1.2px;background:#dadde1;"></div>
<div class="a" style="left:354.0px;top:743.6px;width:643.0px;height:1.2px;background:#dadde1;"></div>
<div class="a" style="left:354.0px;top:776.6px;width:643.0px;height:1.2px;background:#dadde1;"></div>
<div class="t" style="left:367.5px;top:549.0px;font-size:15.0px;line-height:15.0px;font-weight:normal;color:#333;transform:scaleY(1.14);transform-origin:0 12.70px;">Nombre</div>
<div class="t" style="left:501.2px;top:547.7px;font-size:15.8px;line-height:15.8px;font-weight:normal;color:#333;transform:scaleY(1.08);transform-origin:0 13.37px;">Dispositivo seleccionado</div>
<div class="t" style="left:694.8px;top:548.6px;font-size:15.5px;line-height:15.5px;font-weight:normal;color:#333;transform:scaleY(1.1);transform-origin:0 13.12px;">Offset</div>
<div class="t" style="left:785.6px;top:538.0px;font-size:15.4px;line-height:15.4px;font-weight:normal;color:#333;transform:scaleY(1.08);transform-origin:0 13.04px;">Número de</div>
<div class="t" style="left:785.6px;top:557.0px;font-size:15.4px;line-height:15.4px;font-weight:normal;color:#333;transform:scaleY(1.08);transform-origin:0 13.04px;">dispositivos</div>
<div class="t" style="left:891.0px;top:547.9px;font-size:15.8px;line-height:15.8px;font-weight:normal;color:#333;transform:scaleY(1.08);transform-origin:0 13.37px;">Descripción</div>
<div class="a" style="left:356.0px;top:579.6px;width:132.8px;height:31.6px;background:#0a78d7;"></div>
<div class="t" style="left:359.5px;top:588.4px;font-size:16.6px;line-height:16.6px;font-weight:bold;color:#0b1a33;">Control</div>
<div class="a" style="left:491.6px;top:579.8px;width:192.0px;height:31.4px;border:1px solid #b9b9b9;background:#e3e3e3;"></div>
<div class="a" style="left:658.5px;top:580.8px;width:1.0px;height:29.4px;background:#c9c9c9;"></div>
<svg class="a" style="left:664px;top:591.2px;" width="13" height="9.0" viewBox="664 591.2 13 9.0"><polyline points="665.5,593.2 670.5,598.2 675.5,593.2" fill="none" stroke="#555" stroke-width="1.3"/></svg>
<div class="t" style="left:495.5px;top:589.0px;font-size:15.7px;line-height:15.7px;font-weight:normal;color:#222;transform:scaleY(1.1);transform-origin:0 13.29px;">M: Relé interno</div>
<div class="a" style="left:775.0px;top:579.8px;width:104.0px;height:31.8px;background:#ececec;"></div>
<div class="t" style="left:688.0px;top:585.8px;font-size:15.8px;line-height:15.8px;font-weight:normal;color:#222;transform:scaleY(1.13);transform-origin:0 13.37px;">7300</div>
<div class="t" style="left:777.0px;top:585.8px;font-size:15.8px;line-height:15.8px;font-weight:normal;color:#222;transform:scaleY(1.13);transform-origin:0 13.37px;">32</div>
<div class="a" style="left:750.2px;top:583.9px;width:20.7px;height:20.8px;border:1px solid #b3b3b3;border-top-color:#e0e0e0;border-right-color:#d6d6d6;background:#f0f0f0;"></div>
<div class="a" style="left:751.2px;top:593.7px;width:18.7px;height:1.6px;background:#bdbdbd;"></div>
<svg class="a" style="left:750px;top:583px;" width="22" height="23" viewBox="750 583 22 23"><polygon points="756.0,591.8000000000001 765.0,591.8000000000001 760.5,587.0000000000001" fill="#111"/><polygon points="756.0,597.1 765.0,597.1 760.5,601.9" fill="#111"/></svg>
<div class="a" style="left:855.0px;top:583.9px;width:20.7px;height:20.8px;border:1px solid #b3b3b3;border-top-color:#e0e0e0;border-right-color:#d6d6d6;background:#f0f0f0;"></div>
<div class="a" style="left:856.0px;top:593.7px;width:18.7px;height:1.6px;background:#bdbdbd;"></div>
<svg class="a" style="left:855px;top:583px;" width="22" height="23" viewBox="855 583 22 23"><polygon points="860.8,591.8000000000001 869.8,591.8000000000001 865.3,587.0000000000001" fill="#111"/><polygon points="860.8,597.1 869.8,597.1 865.3,601.9" fill="#111"/></svg>
<div class="t" style="left:885.0px;top:588.9px;font-size:15.9px;line-height:15.9px;font-weight:normal;color:#222;transform:scaleY(1.1);transform-origin:0 13.46px;">Dirección de...</div>
<div class="t" style="left:360.5px;top:621.4px;font-size:16.6px;line-height:16.6px;font-weight:bold;color:#111;">Estado</div>
<div class="a" style="left:491.6px;top:612.8px;width:192.0px;height:31.4px;border:1px solid #b9b9b9;background:#e3e3e3;"></div>
<div class="a" style="left:658.5px;top:613.8px;width:1.0px;height:29.4px;background:#c9c9c9;"></div>
<svg class="a" style="left:664px;top:624.2px;" width="13" height="9.0" viewBox="664 624.2 13 9.0"><polyline points="665.5,626.2 670.5,631.2 675.5,626.2" fill="none" stroke="#555" stroke-width="1.3"/></svg>
<div class="t" style="left:495.5px;top:622.0px;font-size:15.7px;line-height:15.7px;font-weight:normal;color:#222;transform:scaleY(1.1);transform-origin:0 13.29px;">M: Relé interno</div>
<div class="a" style="left:775.0px;top:612.8px;width:104.0px;height:31.8px;background:#ececec;"></div>
<div class="t" style="left:688.0px;top:618.8px;font-size:15.8px;line-height:15.8px;font-weight:normal;color:#222;transform:scaleY(1.13);transform-origin:0 13.37px;">7332</div>
<div class="t" style="left:777.0px;top:618.8px;font-size:15.8px;line-height:15.8px;font-weight:normal;color:#222;transform:scaleY(1.13);transform-origin:0 13.37px;">32</div>
<div class="a" style="left:750.2px;top:616.9px;width:20.7px;height:20.8px;border:1px solid #b3b3b3;border-top-color:#e0e0e0;border-right-color:#d6d6d6;background:#f0f0f0;"></div>
<div class="a" style="left:751.2px;top:626.7px;width:18.7px;height:1.6px;background:#bdbdbd;"></div>
<svg class="a" style="left:750px;top:616px;" width="22" height="23" viewBox="750 616 22 23"><polygon points="756.0,624.8000000000001 765.0,624.8000000000001 760.5,620.0000000000001" fill="#111"/><polygon points="756.0,630.1 765.0,630.1 760.5,634.9" fill="#111"/></svg>
<div class="a" style="left:855.0px;top:616.9px;width:20.7px;height:20.8px;border:1px solid #b3b3b3;border-top-color:#e0e0e0;border-right-color:#d6d6d6;background:#f0f0f0;"></div>
<div class="a" style="left:856.0px;top:626.7px;width:18.7px;height:1.6px;background:#bdbdbd;"></div>
<svg class="a" style="left:855px;top:616px;" width="22" height="23" viewBox="855 616 22 23"><polygon points="860.8,624.8000000000001 869.8,624.8000000000001 865.3,620.0000000000001" fill="#111"/><polygon points="860.8,630.1 869.8,630.1 865.3,634.9" fill="#111"/></svg>
<div class="t" style="left:885.0px;top:621.9px;font-size:15.9px;line-height:15.9px;font-weight:normal;color:#222;transform:scaleY(1.1);transform-origin:0 13.46px;">Dirección de...</div>
<div class="t" style="left:360.5px;top:654.4px;font-size:16.6px;line-height:16.6px;font-weight:bold;color:#111;">Entrada PLC</div>
<div class="a" style="left:491.6px;top:645.8px;width:192.0px;height:31.4px;border:1px solid #b9b9b9;background:#e3e3e3;"></div>
<div class="a" style="left:658.5px;top:646.8px;width:1.0px;height:29.4px;background:#c9c9c9;"></div>
<svg class="a" style="left:664px;top:657.2px;" width="13" height="9.0" viewBox="664 657.2 13 9.0"><polyline points="665.5,659.2 670.5,664.2 675.5,659.2" fill="none" stroke="#555" stroke-width="1.3"/></svg>
<div class="t" style="left:495.5px;top:655.0px;font-size:15.7px;line-height:15.7px;font-weight:normal;color:#222;transform:scaleY(1.1);transform-origin:0 13.29px;">D: Registro de datos</div>
<div class="t" style="left:688.0px;top:651.8px;font-size:15.8px;line-height:15.8px;font-weight:normal;color:#222;transform:scaleY(1.13);transform-origin:0 13.37px;">7850</div>
<div class="t" style="left:777.0px;top:651.8px;font-size:15.8px;line-height:15.8px;font-weight:normal;color:#222;transform:scaleY(1.13);transform-origin:0 13.37px;">3</div>
<div class="a" style="left:750.2px;top:649.9px;width:20.7px;height:20.8px;border:1px solid #b3b3b3;border-top-color:#e0e0e0;border-right-color:#d6d6d6;background:#f0f0f0;"></div>
<div class="a" style="left:751.2px;top:659.7px;width:18.7px;height:1.6px;background:#bdbdbd;"></div>
<svg class="a" style="left:750px;top:649px;" width="22" height="23" viewBox="750 649 22 23"><polygon points="756.0,657.8000000000001 765.0,657.8000000000001 760.5,653.0000000000001" fill="#111"/><polygon points="756.0,663.1 765.0,663.1 760.5,667.9" fill="#111"/></svg>
<div class="a" style="left:855.0px;top:649.9px;width:20.7px;height:20.8px;border:1px solid #b3b3b3;border-top-color:#e0e0e0;border-right-color:#d6d6d6;background:#f0f0f0;"></div>
<div class="a" style="left:856.0px;top:659.7px;width:18.7px;height:1.6px;background:#bdbdbd;"></div>
<svg class="a" style="left:855px;top:649px;" width="22" height="23" viewBox="855 649 22 23"><polygon points="860.8,657.8000000000001 869.8,657.8000000000001 865.3,653.0000000000001" fill="#111"/><polygon points="860.8,663.1 869.8,663.1 865.3,667.9" fill="#111"/></svg>
<div class="t" style="left:885.0px;top:654.9px;font-size:15.9px;line-height:15.9px;font-weight:normal;color:#222;transform:scaleY(1.1);transform-origin:0 13.46px;">Dirección de...</div>
<div class="t" style="left:360.5px;top:687.4px;font-size:16.6px;line-height:16.6px;font-weight:bold;color:#111;">Salida PLC</div>
<div class="a" style="left:491.6px;top:678.8px;width:192.0px;height:31.4px;border:1px solid #b9b9b9;background:#e3e3e3;"></div>
<div class="a" style="left:658.5px;top:679.8px;width:1.0px;height:29.4px;background:#c9c9c9;"></div>
<svg class="a" style="left:664px;top:690.2px;" width="13" height="9.0" viewBox="664 690.2 13 9.0"><polyline points="665.5,692.2 670.5,697.2 675.5,692.2" fill="none" stroke="#555" stroke-width="1.3"/></svg>
<div class="t" style="left:495.5px;top:688.0px;font-size:15.7px;line-height:15.7px;font-weight:normal;color:#222;transform:scaleY(1.1);transform-origin:0 13.29px;">D: Registro de datos</div>
<div class="t" style="left:688.0px;top:684.8px;font-size:15.8px;line-height:15.8px;font-weight:normal;color:#222;transform:scaleY(1.13);transform-origin:0 13.37px;">7882</div>
<div class="t" style="left:777.0px;top:684.8px;font-size:15.8px;line-height:15.8px;font-weight:normal;color:#222;transform:scaleY(1.13);transform-origin:0 13.37px;">32</div>
<div class="a" style="left:750.2px;top:682.9px;width:20.7px;height:20.8px;border:1px solid #b3b3b3;border-top-color:#e0e0e0;border-right-color:#d6d6d6;background:#f0f0f0;"></div>
<div class="a" style="left:751.2px;top:692.7px;width:18.7px;height:1.6px;background:#bdbdbd;"></div>
<svg class="a" style="left:750px;top:682px;" width="22" height="23" viewBox="750 682 22 23"><polygon points="756.0,690.8000000000001 765.0,690.8000000000001 760.5,686.0000000000001" fill="#111"/><polygon points="756.0,696.1 765.0,696.1 760.5,700.9" fill="#111"/></svg>
<div class="a" style="left:855.0px;top:682.9px;width:20.7px;height:20.8px;border:1px solid #b3b3b3;border-top-color:#e0e0e0;border-right-color:#d6d6d6;background:#f0f0f0;"></div>
<div class="a" style="left:856.0px;top:692.7px;width:18.7px;height:1.6px;background:#bdbdbd;"></div>
<svg class="a" style="left:855px;top:682px;" width="22" height="23" viewBox="855 682 22 23"><polygon points="860.8,690.8000000000001 869.8,690.8000000000001 865.3,686.0000000000001" fill="#111"/><polygon points="860.8,696.1 869.8,696.1 865.3,700.9" fill="#111"/></svg>
<div class="t" style="left:885.0px;top:687.9px;font-size:15.9px;line-height:15.9px;font-weight:normal;color:#222;transform:scaleY(1.1);transform-origin:0 13.46px;">Dirección de...</div>
<div class="t" style="left:360.5px;top:720.4px;font-size:16.6px;line-height:16.6px;font-weight:bold;color:#111;">Comando</div>
<div class="a" style="left:491.6px;top:711.8px;width:192.0px;height:31.4px;border:1px solid #b9b9b9;background:#e3e3e3;"></div>
<div class="a" style="left:658.5px;top:712.8px;width:1.0px;height:29.4px;background:#c9c9c9;"></div>
<svg class="a" style="left:664px;top:723.2px;" width="13" height="9.0" viewBox="664 723.2 13 9.0"><polyline points="665.5,725.2 670.5,730.2 675.5,725.2" fill="none" stroke="#555" stroke-width="1.3"/></svg>
<div class="t" style="left:495.5px;top:721.0px;font-size:15.7px;line-height:15.7px;font-weight:normal;color:#222;transform:scaleY(1.1);transform-origin:0 13.29px;">D: Registro de datos</div>
<div class="t" style="left:688.0px;top:717.8px;font-size:15.8px;line-height:15.8px;font-weight:normal;color:#222;transform:scaleY(1.13);transform-origin:0 13.37px;">7914</div>
<div class="t" style="left:777.0px;top:717.8px;font-size:15.8px;line-height:15.8px;font-weight:normal;color:#222;transform:scaleY(1.13);transform-origin:0 13.37px;">2</div>
<div class="a" style="left:750.2px;top:715.9px;width:20.7px;height:20.8px;border:1px solid #b3b3b3;border-top-color:#e0e0e0;border-right-color:#d6d6d6;background:#f0f0f0;"></div>
<div class="a" style="left:751.2px;top:725.7px;width:18.7px;height:1.6px;background:#bdbdbd;"></div>
<svg class="a" style="left:750px;top:715px;" width="22" height="23" viewBox="750 715 22 23"><polygon points="756.0,723.8000000000001 765.0,723.8000000000001 760.5,719.0000000000001" fill="#111"/><polygon points="756.0,729.1 765.0,729.1 760.5,733.9" fill="#111"/></svg>
<div class="a" style="left:855.0px;top:715.9px;width:20.7px;height:20.8px;border:1px solid #b3b3b3;border-top-color:#e0e0e0;border-right-color:#d6d6d6;background:#f0f0f0;"></div>
<div class="a" style="left:856.0px;top:725.7px;width:18.7px;height:1.6px;background:#bdbdbd;"></div>
<svg class="a" style="left:855px;top:715px;" width="22" height="23" viewBox="855 715 22 23"><polygon points="860.8,723.8000000000001 869.8,723.8000000000001 865.3,719.0000000000001" fill="#111"/><polygon points="860.8,729.1 869.8,729.1 865.3,733.9" fill="#111"/></svg>
<div class="t" style="left:885.0px;top:720.9px;font-size:15.9px;line-height:15.9px;font-weight:normal;color:#222;transform:scaleY(1.1);transform-origin:0 13.46px;">Dirección de...</div>
<div class="t" style="left:360.5px;top:753.4px;font-size:16.6px;line-height:16.6px;font-weight:bold;color:#111;">Resultado d<span style="letter-spacing:1.6px">...</span></div>
<div class="a" style="left:491.6px;top:744.8px;width:192.0px;height:31.4px;border:1px solid #b9b9b9;background:#e3e3e3;"></div>
<div class="a" style="left:658.5px;top:745.8px;width:1.0px;height:29.4px;background:#c9c9c9;"></div>
<svg class="a" style="left:664px;top:756.2px;" width="13" height="9.0" viewBox="664 756.2 13 9.0"><polyline points="665.5,758.2 670.5,763.2 675.5,758.2" fill="none" stroke="#555" stroke-width="1.3"/></svg>
<div class="t" style="left:495.5px;top:754.0px;font-size:15.7px;line-height:15.7px;font-weight:normal;color:#222;transform:scaleY(1.1);transform-origin:0 13.29px;">D: Registro de datos</div>
<div class="t" style="left:688.0px;top:750.8px;font-size:15.8px;line-height:15.8px;font-weight:normal;color:#222;transform:scaleY(1.13);transform-origin:0 13.37px;">7946</div>
<div class="t" style="left:777.0px;top:750.8px;font-size:15.8px;line-height:15.8px;font-weight:normal;color:#222;transform:scaleY(1.13);transform-origin:0 13.37px;">3</div>
<div class="a" style="left:750.2px;top:748.9px;width:20.7px;height:20.8px;border:1px solid #b3b3b3;border-top-color:#e0e0e0;border-right-color:#d6d6d6;background:#f0f0f0;"></div>
<div class="a" style="left:751.2px;top:758.7px;width:18.7px;height:1.6px;background:#bdbdbd;"></div>
<svg class="a" style="left:750px;top:748px;" width="22" height="23" viewBox="750 748 22 23"><polygon points="756.0,756.8000000000001 765.0,756.8000000000001 760.5,752.0000000000001" fill="#111"/><polygon points="756.0,762.1 765.0,762.1 760.5,766.9" fill="#111"/></svg>
<div class="a" style="left:855.0px;top:748.9px;width:20.7px;height:20.8px;border:1px solid #b3b3b3;border-top-color:#e0e0e0;border-right-color:#d6d6d6;background:#f0f0f0;"></div>
<div class="a" style="left:856.0px;top:758.7px;width:18.7px;height:1.6px;background:#bdbdbd;"></div>
<svg class="a" style="left:855px;top:748px;" width="22" height="23" viewBox="855 748 22 23"><polygon points="860.8,756.8000000000001 869.8,756.8000000000001 865.3,752.0000000000001" fill="#111"/><polygon points="860.8,762.1 869.8,762.1 865.3,766.9" fill="#111"/></svg>
<div class="t" style="left:885.0px;top:753.9px;font-size:15.9px;line-height:15.9px;font-weight:normal;color:#222;transform:scaleY(1.1);transform-origin:0 13.46px;">Dirección de...</div>
<div class="t" style="left:352.8px;top:831.8px;font-size:16.2px;line-height:16.2px;font-weight:bold;color:#8e8e8e;transform:scaleY(1.13);transform-origin:0 13.71px;">Estado: SLMP Scanner connection to 10.62.201.2 established</div>
<div class="a" style="left:311.0px;top:879.2px;width:738.5px;height:60.8px;border:1px solid #a8a8a8;border-radius:5px;"></div>
<div class="a" style="left:321.2px;top:877.2px;width:43.0px;height:5.0px;background:#fff;"></div>
<div class="t" style="left:325.2px;top:869.9px;font-size:15.0px;line-height:15.0px;font-weight:normal;color:#333;transform:scaleY(1.1);transform-origin:0 12.70px;">iQss</div>
<div class="a" style="left:330.4px;top:892.3px;width:19.1px;height:18.7px;border:1px solid #bdbdbd;background:#f7f7f7;"></div>
<div class="a" style="left:333.4px;top:895.3px;width:13.1px;height:12.7px;border:1px solid #d9d9d9;background:#f0f0f0;"></div>
</div></div>
</body></html>
